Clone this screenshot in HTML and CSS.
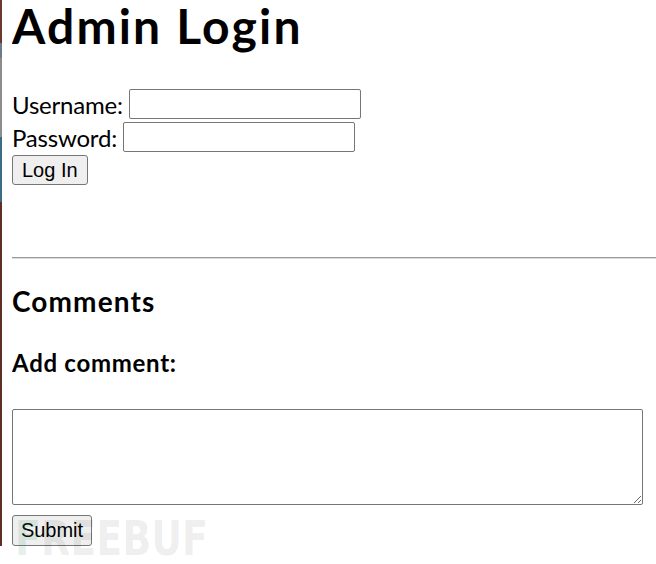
FILE: index.html
```html
<!DOCTYPE html>
<html>
<head>
  <title>Admin Login</title>
  <link rel="stylesheet" href="styles.css">
</head>
<body>

    <h1 class="page-title">Admin Login</h1>

    <form class="login-form">
        <div class="form-row">
            <label for="username">Username:</label>
            <input type="text" id="username" name="username">
        </div>
        <div class="form-row">
            <label for="password">Password:</label>
            <input type="password" id="password" name="password">
        </div>
        <div class="form-row">
            <button type="submit" class="btn">Log In</button>
        </div>
    </form>

    <hr class="divider">

    <h3 class="section-title">Comments</h3>
    <h4 class="sub-title">Add comment:</h4>

    <form class="comment-form">
        <textarea name="comment" class="comment-box"></textarea>
        <div>
            <button type="submit" class="btn btn-submit">Submit</button>
        </div>
    </form>

    <div class="watermark"><span class="watermark-f">F</span>REEBUF</div>

</body>
</html>
```

FILE: styles.css
```css
html {
    background: linear-gradient(#6b3a2e 0 43px, #6a7c8a 43px 58px, #8c8c8c 58px 137px, #3d6a85 137px 202px, #5e2f24 202px) left top / 2px 100% no-repeat, #fff;
}

body {
    margin: 0 0 0 12px;
    font-family: Lato, "Open Sans", sans-serif;
    font-size: 24px;
    color: #000;
}

.page-title {
    margin: 0 0 37px 0;
    font-size: 48px;
    line-height: 52px;
    letter-spacing: 0.045em;
}

.form-row {
    display: flex;
    align-items: center;
    gap: 6px;
    height: 30px;
    margin-bottom: 3px;
}

.form-row label {
    letter-spacing: -0.2px;
}

.form-row input {
    box-sizing: border-box;
    width: 232px;
    height: 30px;
    border: 1px solid #767676;
    border-radius: 2px;
    font-size: 20px;
    padding: 1px 3px;
}

.btn {
    box-sizing: border-box;
    height: 30px;
    padding: 0 9px;
    background: #efefef;
    border: 1px solid #767676;
    border-radius: 3px;
    font-family: "Liberation Sans", Arial, sans-serif;
    font-size: 20px;
    color: #000;
}

.btn-submit {
    height: 31px;
    width: 80px;
    padding: 0;
}

.divider {
    margin: 72px 0 0 0;
    height: 0;
    border: none;
    border-top: 1px solid #9a9a9a;
    border-bottom: 1px solid #dcdcdc;
}

.section-title {
    margin: 25px 0 0 0;
    font-size: 28px;
    line-height: 34px;
    letter-spacing: 0.04em;
}

.sub-title {
    margin: 30px 0 0 0;
    font-size: 24px;
    line-height: 29px;
    letter-spacing: 0.03em;
}

.comment-form {
    margin-top: 32px;
}

.comment-box {
    display: block;
    box-sizing: border-box;
    width: 631px;
    height: 96px;
    margin: 0 0 8px 0;
    border: 1px solid #767676;
    border-radius: 2px;
    font-family: "Liberation Mono", monospace;
    font-size: 20px;
}

.watermark {
    position: absolute;
    left: 15px;
    top: 514px;
    font-family: "DejaVu Sans Condensed", "DejaVu Sans", sans-serif;
    font-weight: bold;
    font-size: 48px;
    line-height: 48px;
    transform: scaleX(0.88);
    transform-origin: left top;
    color: rgba(0, 0, 0, 0.08);
    pointer-events: none;
}

.watermark-f {
    color: rgba(40, 140, 90, 0.14);
}
```
